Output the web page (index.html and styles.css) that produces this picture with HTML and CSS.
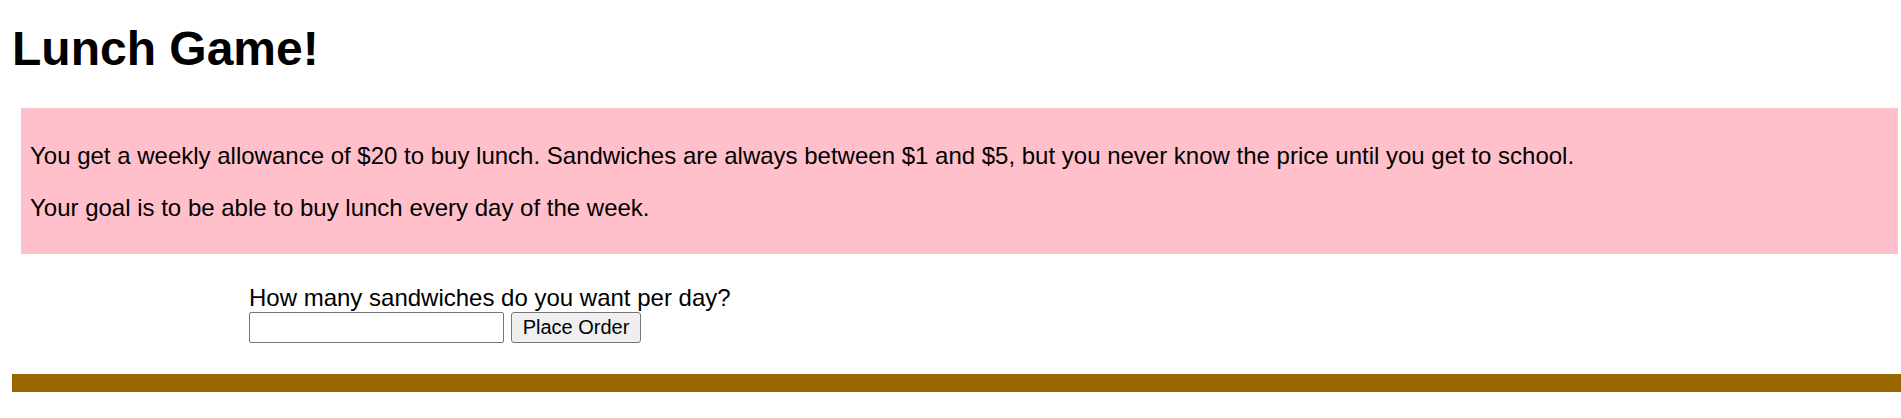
FILE: index.html
```html
<!DOCTYPE html>
<html lang="en">
<head>
<meta charset="utf-8">
<title>Lunch Game!</title>
<link rel="stylesheet" href="styles.css">
</head>
<body>
<h1 class="title">Lunch Game!</h1>
<div class="intro">
  <p>You get a weekly allowance of $20 to buy lunch. Sandwiches are always between $1 and $5, but you never know the price until you get to school.</p>
  <p>Your goal is to be able to buy lunch every day of the week.</p>
</div>
<form class="order">
  <label class="order-label" for="qty">How many sandwiches do you want per day?</label>
  <div class="order-row">
    <input class="order-input" id="qty" type="text">
    <button class="order-btn" type="button">Place Order</button>
  </div>
</form>
<div class="bar"></div>
</body>
</html>
```
FILE: styles.css
```css
html, body {
  background: #ffffff;
}
body {
  margin: 0;
  padding: 0 12px;
  font-family: "Liberation Sans", Arial, sans-serif;
  font-size: 24px;
  color: #000000;
}
.title {
  font-size: 48px;
  font-weight: bold;
  margin: 21px 0 32px;
  line-height: 55px;
}
.intro {
  background: #ffc0cb;
  margin-left: 9px;
  margin-right: -9px;
  padding: 10px 9px 9px;
}
.intro p {
  margin: 24px 0;
  line-height: 27.6px;
}
.order {
  margin: 30px 0 31px 237px;
}
.order-label {
  display: block;
  line-height: 27.6px;
}
.order-row {
  display: flex;
  gap: 7px;
  align-items: center;
}
.order-input {
  box-sizing: border-box;
  width: 255px;
  height: 31px;
  margin: 0;
  border: 1px solid #767676;
  border-radius: 2px;
  font-family: "Liberation Sans", Arial, sans-serif;
  font-size: 20px;
  padding: 1px 3px;
  background: #ffffff;
}
.order-btn {
  box-sizing: border-box;
  width: 130px;
  height: 31px;
  margin: 0;
  border: 1px solid #767676;
  border-radius: 3px;
  background: #efefef;
  font-family: "Liberation Sans", Arial, sans-serif;
  font-size: 20px;
  color: #000000;
  padding: 0 9px;
}
.bar {
  height: 18px;
  background: #996600;
  margin-right: -12px;
}
```
